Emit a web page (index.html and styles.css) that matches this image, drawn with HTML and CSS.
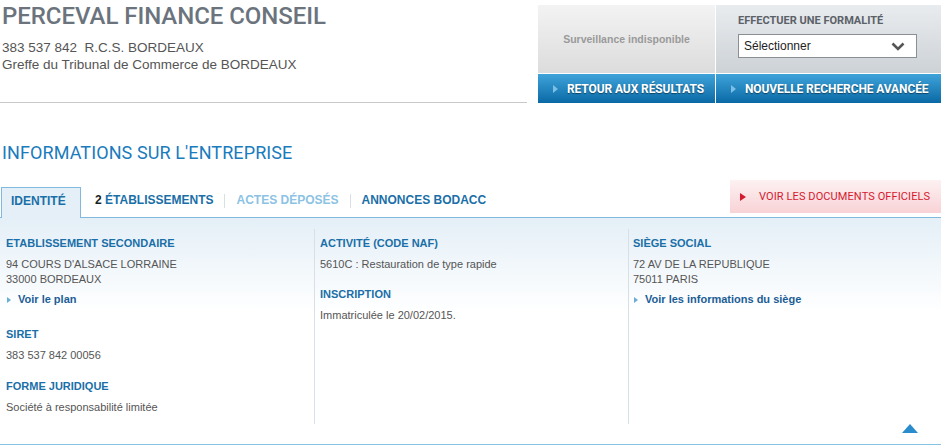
FILE: index.html
```html
<!DOCTYPE html>
<html lang="fr">
<head>
<meta charset="utf-8">
<title>PERCEVAL FINANCE CONSEIL</title>
<link rel="stylesheet" href="styles.css">
</head>
<body>
<div class="page">
  <header class="top">
    <div class="company">
      <h1 class="company-name">PERCEVAL FINANCE CONSEIL</h1>
      <p class="company-line">383 537 842&nbsp; R.C.S. BORDEAUX</p>
      <p class="company-line">Greffe du Tribunal de Commerce de BORDEAUX</p>
    </div>
    <div class="actions">
      <div class="box box-gray"><span class="surv">Surveillance indisponible</span></div>
      <div class="box box-blue-gray">
        <div class="form-label">EFFECTUER UNE FORMALITÉ</div>
        <div class="select">
          <span>Sélectionner</span>
          <svg class="chev" width="14" height="9" viewBox="0 0 14 9"><path d="M1.5 1.5 L7 7 L12.5 1.5" fill="none" stroke="#555" stroke-width="2.6"/></svg>
        </div>
      </div>
      <a class="btn-blue"><span class="tri tri-light"></span>RETOUR AUX RÉSULTATS</a>
      <a class="btn-blue"><span class="tri tri-light"></span>NOUVELLE RECHERCHE AVANCÉE</a>
    </div>
  </header>

  <h2 class="section-title">INFORMATIONS SUR L'ENTREPRISE</h2>

  <div class="tabs-row">
    <nav class="tabs">
      <a class="tab tab-active">IDENTITÉ</a>
      <a class="tab"><span class="num">2</span> ÉTABLISSEMENTS</a>
      <span class="sep"></span>
      <a class="tab tab-disabled">ACTES DÉPOSÉS</a>
      <span class="sep"></span>
      <a class="tab">ANNONCES BODACC</a>
    </nav>
    <a class="btn-red"><span class="tri tri-red"></span>VOIR LES DOCUMENTS OFFICIELS</a>
  </div>

  <section class="panel">
    <div class="cols">
      <div class="col">
        <h3 class="label">ETABLISSEMENT SECONDAIRE</h3>
        <p class="val">94 COURS D'ALSACE LORRAINE<br>33000 BORDEAUX</p>
        <a class="link"><span class="tri tri-small"></span>Voir le plan</a>
        <h3 class="label mt-l">SIRET</h3>
        <p class="val">383 537 842 00056</p>
        <h3 class="label mt-m">FORME JURIDIQUE</h3>
        <p class="val">Société à responsabilité limitée</p>
      </div>
      <div class="col col-mid">
        <h3 class="label">ACTIVITÉ (CODE NAF)</h3>
        <p class="val">5610C : Restauration de type rapide</p>
        <h3 class="label mt-s">INSCRIPTION</h3>
        <p class="val">Immatriculée le 20/02/2015.</p>
      </div>
      <div class="col col-right">
        <h3 class="label">SIÈGE SOCIAL</h3>
        <p class="val">72 AV DE LA REPUBLIQUE<br>75011 PARIS</p>
        <a class="link"><span class="tri tri-small"></span>Voir les informations du siège</a>
      </div>
    </div>
    <div class="panel-foot"><span class="up"></span></div>
  </section>
</div>
</body>
</html>
```
FILE: styles.css
```css
* { box-sizing: border-box; }
html, body { margin: 0; padding: 0; background: #fff; }
body { font-family: "Liberation Sans", Arial, sans-serif; color: #555; }
.page { width: 941px; }

.top { display: flex; align-items: flex-start; }
.company { width: 527px; height: 103px; border-bottom: 1px solid #c8c8c8; padding-left: 2px; }
.company-name {
  margin: 0; padding-top: 2px;
  font-family: Roboto, sans-serif; font-weight: 500; font-size: 24px; line-height: 28px;
  color: #6b747d; letter-spacing: -0.05px;
}
.company-line { margin: 0; font-size: 13.5px; line-height: 17px; color: #555; }
.company-name + .company-line { margin-top: 9px; }

.actions {
  margin-left: 11px; margin-top: 5px; width: 403px;
  display: grid; grid-template-columns: 177px 225px; grid-template-rows: 68px 29px; gap: 1px;
}
.box { display: flex; flex-direction: column; }
.box-gray {
  background: linear-gradient(#f3f3f3, #dcdcdc);
  align-items: center; justify-content: center;
}
.surv { font-size: 10.5px; font-weight: bold; color: #9a9a9a; }
.box-blue-gray { background: linear-gradient(#e9ecef, #cdd2d6); padding: 9px 0 0 22px; }
.form-label { font-family: Roboto, sans-serif; font-size: 11px; font-weight: 700; color: #5b6168; line-height: 13px; }
.select {
  margin-top: 7px; width: 179px; height: 24px; background: #fff; border: 1px solid #8a8f94;
  display: flex; align-items: center; justify-content: space-between; padding: 0 11px 0 5px;
  font-size: 12px; color: #222;
}
.btn-blue {
  display: flex; align-items: center;
  background: linear-gradient(#3fa3da, #0a69a5);
  font-family: Roboto, sans-serif; font-weight: bold; font-size: 12px; color: #fff;
  letter-spacing: -0.1px;
  text-shadow: 0 1px 1px rgba(0,0,0,0.45);
  padding-left: 15px;
}
.tri { display: inline-block; width: 0; height: 0; border-style: solid; }
.tri-light { border-width: 4px 0 4px 5px; border-color: transparent transparent transparent #7cc0e8; margin-right: 9px; }

.section-title {
  margin: 39px 0 0 2px;
  font-family: Roboto, sans-serif; font-weight: 400; font-size: 18px; line-height: 22px;
  color: #1a7bbd; letter-spacing: 0.1px;
}

.tabs-row { display: flex; justify-content: space-between; align-items: flex-end; margin-top: 16px; height: 37px; }
.tabs { display: flex; align-items: flex-start; height: 31px; margin-bottom: -1px; position: relative; z-index: 1; }
.tab { font-size: 12px; font-weight: bold; color: #1a6fa8; padding: 0 11px; line-height: 27px; }
.tab-active {
  background: #e4eff7; border: 1px solid #80badf; border-bottom: none;
  height: 31px; width: 80px; margin-left: 1px; padding: 0 9px; line-height: 26px;
}
.tab-active + .tab { margin-left: 3px; }
.num { color: #1b1f24; }
.tab-disabled { color: #8cc3e4; }
.sep { width: 1px; height: 14px; margin-top: 7px; background: #dadfe3; }
.btn-red {
  width: 211px; height: 33px; margin-bottom: 4px;
  background: linear-gradient(#fdf1f2, #f8d2d6);
  display: flex; align-items: center; padding-left: 10px;
  font-family: Roboto, sans-serif; font-size: 11px; color: #d51a2e; letter-spacing: 0.1px;
}
.tri-red { border-width: 4.5px 0 4.5px 6px; border-color: transparent transparent transparent #d51a2e; margin-right: 13px; }

.panel {
  border-top: 1px solid #80badf; border-bottom: 1px solid #86c2e2;
  background: linear-gradient(#e4eff7 0px, #ffffff 95px);
}
.cols { display: grid; grid-template-columns: 314px 314px 313px; padding-top: 11px; }
.col { min-height: 195px; padding: 7px 6px 0; }
.col-mid { border-left: 1px solid #d8e0e7; padding-left: 5px; }
.col-right { border-left: 1px solid #d8e0e7; padding-left: 4px; }
.label { margin: 0; font-size: 11px; font-weight: bold; color: #1a6fa8; line-height: 14px; }
.val { margin: 7px 0 0; font-size: 11px; line-height: 15px; color: #555; }
.link { display: flex; align-items: center; margin-top: 5px; font-size: 11px; font-weight: bold; color: #1b5e96; line-height: 15px; }
.tri-small { border-width: 3.5px 0 3.5px 4px; border-color: transparent transparent transparent #6aaed8; margin: 0 7px 0 1px; }
.mt-l { margin-top: 20px; }
.mt-m { margin-top: 16px; }
.mt-s { margin-top: 15px; }

.panel-foot { height: 20px; display: flex; justify-content: flex-end; padding-right: 23px; }
.up { width: 0; height: 0; border-style: solid; border-width: 0 8px 9px 8px; border-color: transparent transparent #2a8ccc transparent; }
```
